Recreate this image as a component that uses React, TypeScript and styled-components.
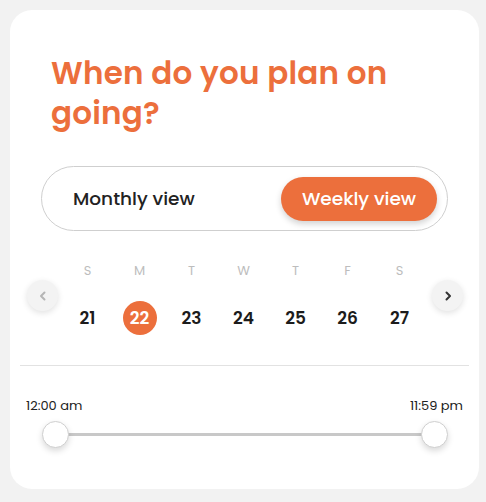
import * as React from 'react';
import styled, { createGlobalStyle } from 'styled-components';

const GlobalStyle = createGlobalStyle`
  body {
    margin: 0;
    background: #f2f2f2;
    font-family: 'Poppins', 'Inter', 'Noto Sans', sans-serif;
  }
`;

const Page = styled.div`
  padding: 10px 7px 13px 10px;
`;

const Card = styled.div`
  width: 469px;
  height: 479px;
  box-sizing: border-box;
  background: #fff;
  border-radius: 22px;
  padding: 0 10px;
`;

const Title = styled.h1`
  margin: 0;
  padding: 43px 31px 0;
  font-size: 31px;
  line-height: 40px;
  font-weight: 600;
  color: #ec6f3c;
  letter-spacing: 0.2px;
`;

const Toggle = styled.div`
  margin: 33px 21px 0;
  height: 65px;
  box-sizing: border-box;
  border: 1px solid #cfcfcf;
  border-radius: 33px;
  display: flex;
  align-items: center;
  justify-content: space-between;
  padding: 0 10px 0 31px;
`;

const ToggleOption = styled.button<{ active?: boolean }>`
  border: 0;
  font-family: inherit;
  font-size: 18.5px;
  font-weight: 500;
  height: 44px;
  width: 156px;
  border-radius: 22px;
  cursor: pointer;
  ${p =>
    p.active
      ? `
    background: #ec6f3c;
    color: #fff;
    box-shadow: 0 3px 6px rgba(0,0,0,0.18);
  `
      : `
    background: transparent;
    color: #222;
    width: auto;
    padding: 0;
  `}
`;

const Week = styled.div`
  margin-top: 30px;
  display: flex;
  align-items: center;
  justify-content: space-between;
  padding: 0 6px 0 7px;
`;

const NavButton = styled.button<{ dim?: boolean }>`
  width: 31px;
  height: 31px;
  border-radius: 50%;
  border: 0;
  background: #f3f3f3;
  box-shadow: 0 2px 6px rgba(0,0,0,0.12);
  display: flex;
  align-items: center;
  justify-content: center;
  padding: 0;
  color: ${p => (p.dim ? '#b5b5b5' : '#333')};
  margin-top: -5px;
`;

const Days = styled.div`
  display: grid;
  grid-template-columns: repeat(7, 52px);
  row-gap: 20px;
  justify-items: center;
  align-items: center;
  margin-right: 3px;
`;

const DayLetter = styled.span`
  font-size: 13px;
  line-height: 20px;
  color: #bdbdbd;
`;

const DayNumber = styled.span<{ selected?: boolean }>`
  width: 34px;
  height: 34px;
  border-radius: 50%;
  display: flex;
  align-items: center;
  justify-content: center;
  font-size: 17px;
  font-weight: 600;
  color: ${p => (p.selected ? '#fff' : '#1c1c1c')};
  background: ${p => (p.selected ? '#ec6f3c' : 'transparent')};
`;

const Divider = styled.hr`
  margin: 30px 0 0;
  border: 0;
  border-top: 1px solid #e2e2e2;
`;

const TimeSection = styled.div`
  padding: 0 6px;
  margin-top: 30px;
`;

const TimeLabels = styled.div`
  display: flex;
  justify-content: space-between;
  font-size: 13px;
  line-height: 20px;
  color: #222;
`;

const Slider = styled.div`
  position: relative;
  margin: 5px 15px 0 16px;
  height: 27px;
  display: flex;
  align-items: center;
  justify-content: space-between;
`;

const Track = styled.div`
  position: absolute;
  left: 14px;
  right: 14px;
  top: 12px;
  height: 3px;
  background: #c8c8c8;
`;

const Thumb = styled.div`
  position: relative;
  width: 27px;
  height: 27px;
  box-sizing: border-box;
  border-radius: 50%;
  background: #fff;
  border: 1px solid #cfcfcf;
  box-shadow: 0 3px 6px rgba(0,0,0,0.15);
`;

const Chevron: React.FC<{ dir: 'left' | 'right' }> = ({ dir }) => (
  <svg width="10" height="10" viewBox="0 0 10 10" fill="none">
    <path
      d={dir === 'left' ? 'M6.5 1.5 L3 5 L6.5 8.5' : 'M3.5 1.5 L7 5 L3.5 8.5'}
      stroke="currentColor"
      strokeWidth="2"
      strokeLinecap="round"
      strokeLinejoin="round"
    />
  </svg>
);

const letters = ['S', 'M', 'T', 'W', 'T', 'F', 'S'];
const dates = [21, 22, 23, 24, 25, 26, 27];

const App: React.FC = () => {
  const [view, setView] = React.useState<'monthly' | 'weekly'>('weekly');
  const [selected, setSelected] = React.useState(22);

  return (
    <Page>
      <GlobalStyle />
      <Card>
        <Title>
          When do you plan on
          <br />
          going?
        </Title>
        <Toggle>
          <ToggleOption active={view === 'monthly'} onClick={() => setView('monthly')}>
            Monthly view
          </ToggleOption>
          <ToggleOption active={view === 'weekly'} onClick={() => setView('weekly')}>
            Weekly view
          </ToggleOption>
        </Toggle>
        <Week>
          <NavButton dim aria-label="previous week">
            <Chevron dir="left" />
          </NavButton>
          <Days>
            {letters.map((l, i) => (
              <DayLetter key={'l' + i}>{l}</DayLetter>
            ))}
            {dates.map(d => (
              <DayNumber key={d} selected={d === selected} onClick={() => setSelected(d)}>
                {d}
              </DayNumber>
            ))}
          </Days>
          <NavButton aria-label="next week">
            <Chevron dir="right" />
          </NavButton>
        </Week>
        <Divider />
        <TimeSection>
          <TimeLabels>
            <span>12:00 am</span>
            <span>11:59 pm</span>
          </TimeLabels>
          <Slider>
            <Track />
            <Thumb />
            <Thumb />
          </Slider>
        </TimeSection>
      </Card>
    </Page>
  );
};

export default App;
